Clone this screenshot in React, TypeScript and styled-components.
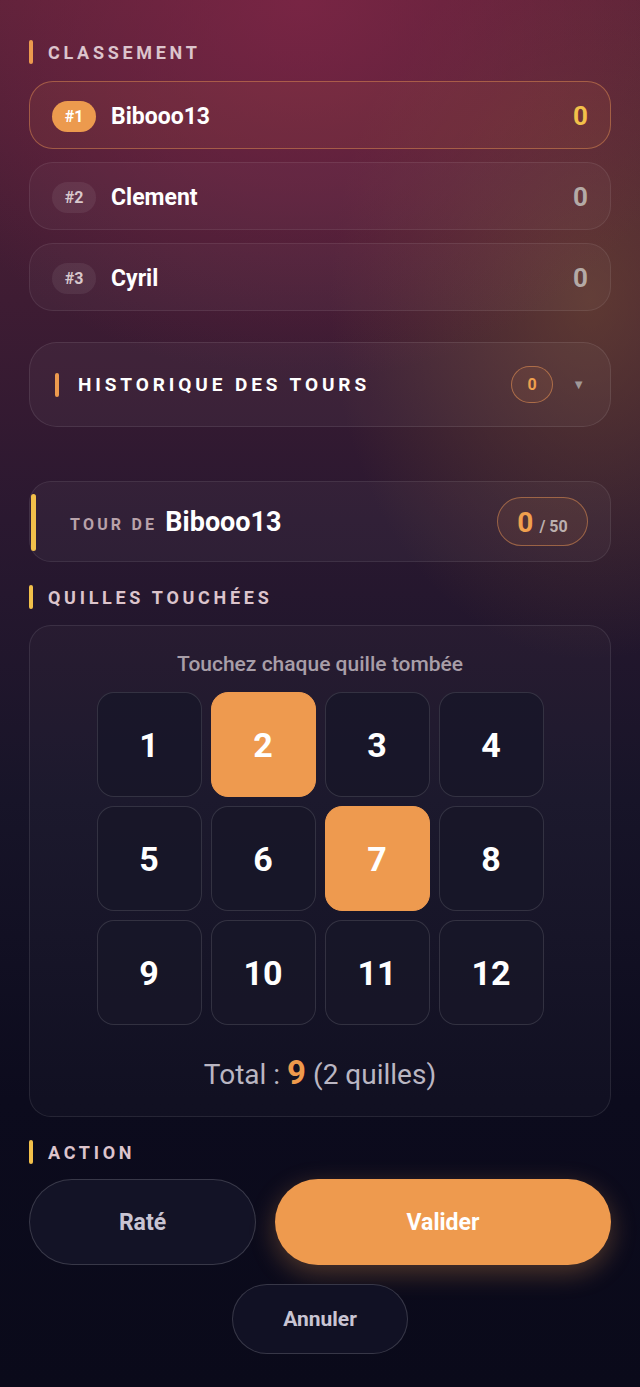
import React, { useState } from 'react';
import styled, { createGlobalStyle, css } from 'styled-components';

const GlobalStyle = createGlobalStyle`
  html, body {
    margin: 0;
    padding: 0;
    background: #0b0a1b;
  }
  body {
    font-family: Roboto, "Noto Sans", "Liberation Sans", sans-serif;
    color: #fff;
  }
  * {
    box-sizing: border-box;
  }
`;

const Page = styled.div`
  min-height: 1387px;
  padding: 40px 29px 30px 29px;
  background:
    radial-gradient(ellipse 420px 380px at 300px 0px, rgba(130, 38, 72, 0.75), rgba(130, 38, 72, 0) 100%),
    radial-gradient(ellipse 260px 360px at 590px 300px, rgba(120, 80, 50, 0.55), rgba(120, 80, 50, 0) 100%),
    linear-gradient(180deg, #5a2238 0px, #3e1c33 300px, #2a1830 520px, #171428 800px, #0c0b1d 1100px, #0a0a1a 1387px);
  display: flex;
  flex-direction: column;
`;

const SectionTitle = styled.div<{ $bar: string; $color?: string }>`
  display: flex;
  align-items: center;
  gap: 15px;
  height: 24px;
  font-size: 18px;
  font-weight: 700;
  letter-spacing: 3.7px;
  text-transform: uppercase;
  color: ${(p) => p.$color || '#dcc4cc'};
  &:before {
    content: '';
    width: 4px;
    height: 24px;
    border-radius: 2px;
    background: ${(p) => p.$bar};
  }
`;

const RankList = styled.div`
  display: flex;
  flex-direction: column;
  gap: 13px;
  margin-top: 17px;
`;

const RankRow = styled.div<{ $leader?: boolean }>`
  height: 68px;
  border-radius: 24px;
  display: flex;
  align-items: center;
  padding: 2px 22px 0 22px;
  border: 1px solid ${(p) => (p.$leader ? 'rgba(236, 150, 84, 0.45)' : 'rgba(255, 255, 255, 0.08)')};
  background: ${(p) =>
    p.$leader ? 'rgba(236, 140, 80, 0.08)' : 'rgba(255, 255, 255, 0.03)'};
`;

const RankBadge = styled.span<{ $leader?: boolean }>`
  width: 44px;
  height: 31px;
  border-radius: 16px;
  display: flex;
  align-items: center;
  justify-content: center;
  font-size: 16px;
  font-weight: 700;
  ${(p) =>
    p.$leader
      ? css`
          background: #ec9a4e;
          color: #fff;
        `
      : css`
          background: rgba(255, 255, 255, 0.07);
          color: #d8c8cc;
        `}
`;

const PlayerName = styled.span`
  margin-left: 15px;
  font-size: 23px;
  font-weight: 700;
  color: #fff;
  flex: 1;
`;

const Score = styled.span<{ $leader?: boolean }>`
  font-size: 26px;
  font-weight: 700;
  color: ${(p) => (p.$leader ? '#f2c04a' : '#b4aaa6')};
`;

const HistoryCard = styled.div`
  margin-top: 31px;
  height: 85px;
  border-radius: 28px;
  border: 1px solid rgba(255, 255, 255, 0.09);
  background: rgba(255, 255, 255, 0.035);
  display: flex;
  align-items: center;
  padding: 0 25px 0 25px;
`;

const HistoryTitle = styled(SectionTitle)`
  flex: 1;
  font-size: 19px;
  letter-spacing: 3.9px;
  gap: 19px;
`;

const CountPill = styled.span`
  width: 42px;
  height: 37px;
  border-radius: 19px;
  border: 1.5px solid rgba(236, 150, 84, 0.55);
  background: rgba(236, 150, 84, 0.08);
  color: #f0a04e;
  font-size: 16px;
  font-weight: 700;
  display: flex;
  align-items: center;
  justify-content: center;
`;

const Caret = styled.span`
  margin-left: 19px;
  font-size: 13px;
  color: #a09898;
`;

const TurnCard = styled.div`
  margin-top: 54px;
  height: 81px;
  border-radius: 22px;
  border: 1px solid rgba(255, 255, 255, 0.08);
  background: rgba(255, 255, 255, 0.035);
  display: flex;
  align-items: center;
  padding: 0 22px 0 0;
  position: relative;
  &:before {
    content: '';
    position: absolute;
    left: 1px;
    top: 12px;
    bottom: 10px;
    width: 5px;
    border-radius: 3px;
    background: #f2c04a;
  }
`;

const TurnLabel = styled.span`
  margin-left: 40px;
  font-size: 16px;
  font-weight: 700;
  letter-spacing: 3.2px;
  color: #b8a2aa;
  margin-top: 5px;
`;

const TurnName = styled.span`
  margin-left: 8px;
  font-size: 27px;
  font-weight: 700;
  color: #fff;
  flex: 1;
`;

const ThrowPill = styled.span`
  width: 91px;
  height: 49px;
  border-radius: 25px;
  border: 1.5px solid rgba(236, 150, 84, 0.5);
  background: rgba(236, 150, 84, 0.08);
  display: flex;
  align-items: baseline;
  justify-content: center;
  padding-top: 8px;
  gap: 6px;
`;

const ThrowNow = styled.span`
  font-size: 28px;
  font-weight: 700;
  color: #f0a04e;
`;

const ThrowMax = styled.span`
  font-size: 16px;
  font-weight: 700;
  color: #bcb0ae;
`;

const PinsTitle = styled(SectionTitle)`
  margin-top: 23px;
`;

const PinsCard = styled.div`
  margin-top: 16px;
  border-radius: 22px;
  border: 1px solid rgba(255, 255, 255, 0.09);
  background: rgba(255, 255, 255, 0.025);
  padding: 24px 0 24px 0;
  display: flex;
  flex-direction: column;
  align-items: center;
`;

const Hint = styled.div`
  font-size: 21px;
  font-weight: 500;
  color: #a89ea8;
  height: 28px;
  line-height: 28px;
`;

const PinGrid = styled.div`
  margin-top: 14px;
  display: grid;
  grid-template-columns: repeat(4, 105px);
  grid-auto-rows: 105px;
  gap: 9px;
`;

const Pin = styled.button<{ $on?: boolean }>`
  border-radius: 17px;
  font-family: inherit;
  font-size: 34px;
  font-weight: 700;
  color: #fff;
  display: flex;
  align-items: center;
  justify-content: center;
  cursor: pointer;
  padding: 0;
  ${(p) =>
    p.$on
      ? css`
          background: #ee9a4f;
          border: 1px solid #ee9a4f;
        `
      : css`
          background: rgba(24, 22, 40, 0.85);
          border: 1px solid rgba(255, 255, 255, 0.12);
        `}
`;

const Total = styled.div`
  margin-top: 28px;
  font-size: 28px;
  color: #bab6c2;
  display: flex;
  align-items: baseline;
  gap: 7px;
`;

const TotalValue = styled.span`
  font-size: 33px;
  font-weight: 700;
  color: #ef9a4c;
`;

const ActionTitle = styled(SectionTitle)`
  margin-top: 23px;
`;

const ActionRow = styled.div`
  margin-top: 15px;
  display: flex;
  gap: 19px;
`;

const PillButton = styled.button<{ $primary?: boolean }>`
  height: 86px;
  border-radius: 43px;
  font-family: inherit;
  font-size: 23px;
  font-weight: 700;
  cursor: pointer;
  ${(p) =>
    p.$primary
      ? css`
          flex: 1;
          background: #ee9a4e;
          border: none;
          color: #fff;
          box-shadow: 0 8px 26px rgba(238, 154, 78, 0.3);
        `
      : css`
          width: 227px;
          background: #131326;
          border: 1.5px solid rgba(255, 255, 255, 0.16);
          color: #c8c4d2;
        `}
`;

const CancelButton = styled.button`
  align-self: center;
  margin-top: 19px;
  width: 176px;
  height: 70px;
  border-radius: 35px;
  background: #111124;
  border: 1.5px solid rgba(255, 255, 255, 0.16);
  color: #c8c4d2;
  font-family: inherit;
  font-size: 21px;
  font-weight: 700;
  cursor: pointer;
`;

const players = [
  { rank: 1, name: 'Bibooo13', score: 0 },
  { rank: 2, name: 'Clement', score: 0 },
  { rank: 3, name: 'Cyril', score: 0 },
];

export default function App() {
  const [pins, setPins] = useState<number[]>([2, 7]);
  const toggle = (n: number) =>
    setPins((cur) => (cur.includes(n) ? cur.filter((x) => x !== n) : [...cur, n]));
  const total = pins.length === 1 ? pins[0] : pins.length;

  return (
    <>
      <GlobalStyle />
      <Page>
        <SectionTitle $bar="#ec9a4e">Classement</SectionTitle>
        <RankList>
          {players.map((p) => (
            <RankRow key={p.rank} $leader={p.rank === 1}>
              <RankBadge $leader={p.rank === 1}>#{p.rank}</RankBadge>
              <PlayerName>{p.name}</PlayerName>
              <Score $leader={p.rank === 1}>{p.score}</Score>
            </RankRow>
          ))}
        </RankList>

        <HistoryCard>
          <HistoryTitle $bar="#ec9a4e" $color="#fff">
            Historique des tours
          </HistoryTitle>
          <CountPill>0</CountPill>
          <Caret>▼</Caret>
        </HistoryCard>

        <TurnCard>
          <TurnLabel>TOUR DE</TurnLabel>
          <TurnName>Bibooo13</TurnName>
          <ThrowPill>
            <ThrowNow>0</ThrowNow>
            <ThrowMax>/ 50</ThrowMax>
          </ThrowPill>
        </TurnCard>

        <PinsTitle $bar="#f2c04a">Quilles touchées</PinsTitle>
        <PinsCard>
          <Hint>Touchez chaque quille tombée</Hint>
          <PinGrid>
            {Array.from({ length: 12 }, (_, i) => i + 1).map((n) => (
              <Pin key={n} $on={pins.includes(n)} onClick={() => toggle(n)}>
                {n}
              </Pin>
            ))}
          </PinGrid>
          <Total>
            <span>Total :</span>
            <TotalValue>{pins.length > 1 ? 9 : total}</TotalValue>
            <span>({pins.length} quilles)</span>
          </Total>
        </PinsCard>

        <ActionTitle $bar="#f2c04a">Action</ActionTitle>
        <ActionRow>
          <PillButton>Raté</PillButton>
          <PillButton $primary>Valider</PillButton>
        </ActionRow>
        <CancelButton>Annuler</CancelButton>
      </Page>
    </>
  );
}
